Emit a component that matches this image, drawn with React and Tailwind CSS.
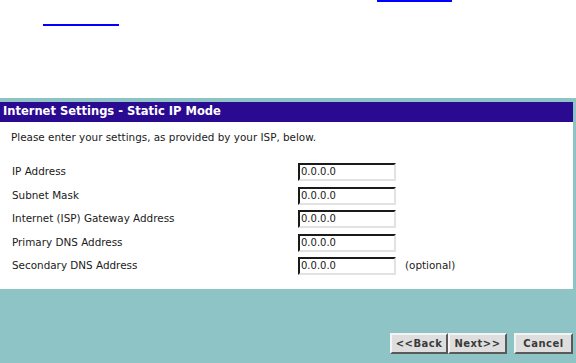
import React from 'react'

const font = { fontFamily: '"DejaVu Sans", Verdana, sans-serif' }

const fields = [
  { label: 'IP Address', value: '0.0.0.0' },
  { label: 'Subnet Mask', value: '0.0.0.0' },
  { label: 'Internet (ISP) Gateway Address', value: '0.0.0.0' },
  { label: 'Primary DNS Address', value: '0.0.0.0' },
  { label: 'Secondary DNS Address', value: '0.0.0.0', note: '(optional)' },
]

function Btn({ children, className = '' }) {
  return (
    <button
      className={
        'h-[21px] border-2 border-t-[#f4f4f4] border-l-[#f4f4f4] border-b-[#5a5a5a] border-r-[#5a5a5a] bg-[#dedede] text-[10px] font-bold tracking-[0.5px] text-[#3a3a3a] ' +
        className
      }
    >
      {children}
    </button>
  )
}

export default function App() {
  return (
    <div className="flex h-[363px] w-[576px] flex-col overflow-hidden bg-white" style={font}>
      {/* cropped links above the panel */}
      <div className="h-[98px] shrink-0">
        <div className="ml-[377px] h-[2px] w-[75px] bg-[#0000ff]" />
        <div className="ml-[43px] mt-[22px] h-[2px] w-[76px] bg-[#0000ff]" />
      </div>

      <div className="flex flex-1 flex-col bg-[#8fc4c6] pr-[3px] pt-[4px]">
        <div className="flex h-[20px] items-center bg-[#2b0a92] pl-[3px] text-[11.5px] font-bold text-white">
          Internet Settings - Static IP Mode
        </div>

        <div className="h-[167px] bg-white pl-[11px] pt-[9px] text-[10.4px] text-[#1a1a1a]">
          <p className="leading-[13px]">Please enter your settings, as provided by your ISP, below.</p>
          <div className="mt-[19px] flex flex-col gap-[5.5px]">
            {fields.map((f) => (
              <div key={f.label} className="flex h-[18px] items-center">
                <span className="w-[287px] pl-px">{f.label}</span>
                <div className="flex h-[18px] w-[98px] items-center border-2 border-t-[#1a1a1a] border-l-[#1a1a1a] border-b-[#e2e2e2] border-r-[#e2e2e2] bg-white pl-px text-[10px] leading-none">
                  {f.value}
                </div>
                {f.note && <span className="ml-[9px]">{f.note}</span>}
              </div>
            ))}
          </div>
        </div>

        <div className="flex flex-1 items-start justify-end pt-[44px]">
          <Btn className="w-[58px]">&lt;&lt;Back</Btn>
          <Btn className="w-[59px]">Next&gt;&gt;</Btn>
          <Btn className="ml-[7px] w-[59px]">Cancel</Btn>
        </div>
      </div>
    </div>
  )
}
